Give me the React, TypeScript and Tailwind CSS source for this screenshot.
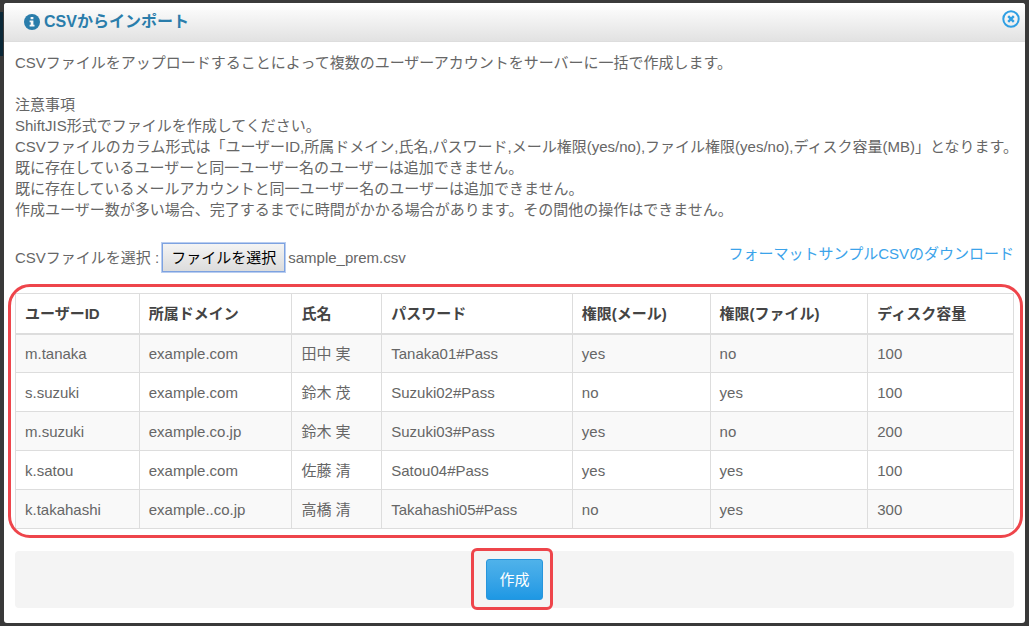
import { useRef, useState } from "react";

interface IUserRow {
    id: string;
    domain: string;
    name: string;
    password: string;
    mail: string;
    file: string;
    disk: number;
}

const columns = [
    { label: "ユーザーID", width: "w-[12.4%]" },
    { label: "所属ドメイン", width: "w-[15.3%]" },
    { label: "氏名", width: "w-[9%]" },
    { label: "パスワード", width: "w-[19.1%]" },
    { label: "権限(メール)", width: "w-[13.8%]" },
    { label: "権限(ファイル)", width: "w-[15.8%]" },
    { label: "ディスク容量", width: "w-[14.6%]" },
];

const users: IUserRow[] = [
    { id: "m.tanaka", domain: "example.com", name: "田中 実", password: "Tanaka01#Pass", mail: "yes", file: "no", disk: 100 },
    { id: "s.suzuki", domain: "example.com", name: "鈴木 茂", password: "Suzuki02#Pass", mail: "no", file: "yes", disk: 100 },
    { id: "m.suzuki", domain: "example.co.jp", name: "鈴木 実", password: "Suzuki03#Pass", mail: "yes", file: "no", disk: 200 },
    { id: "k.satou", domain: "example.com", name: "佐藤 清", password: "Satou04#Pass", mail: "yes", file: "yes", disk: 100 },
    { id: "k.takahashi", domain: "example..co.jp", name: "高橋 清", password: "Takahashi05#Pass", mail: "no", file: "yes", disk: 300 },
];

const notes = [
    "ShiftJIS形式でファイルを作成してください。",
    "CSVファイルのカラム形式は「ユーザーID,所属ドメイン,氏名,パスワード,メール権限(yes/no),ファイル権限(yes/no),ディスク容量(MB)」となります。",
    "既に存在しているユーザーと同一ユーザー名のユーザーは追加できません。",
    "既に存在しているメールアカウントと同一ユーザー名のユーザーは追加できません。",
    "作成ユーザー数が多い場合、完了するまでに時間がかかる場合があります。その間他の操作はできません。",
];

function InfoIcon() {
    return (
        <svg className="size-4" viewBox="0 0 16 16" aria-hidden="true">
            <circle cx="8" cy="8" r="8" fill="#2a7dab" />
            <path d="M6.6 3h2.8v2.2H6.6zM5.6 6.4h3.8v4.4h1.1v1.8H5.6v-1.8h1.1V8.2H5.6z" fill="#f8f8f8" />
        </svg>
    )
}

function CloseIcon() {
    return (
        <svg className="size-[18px]" viewBox="0 0 18 18" fill="none" stroke="#2f9fe3" aria-hidden="true">
            <circle cx="9" cy="9" r="7.7" strokeWidth="2" />
            <path d="M6.2 6.2l5.6 5.6M11.8 6.2l-5.6 5.6" strokeWidth="2.4" />
        </svg>
    )
}

function FilePicker() {
    const input = useRef<HTMLInputElement>(null);
    const [fileName, setFileName] = useState("sample_prem.csv");

    return (
        <div className="flex items-center gap-[3px]">
            <label htmlFor="csv-file">CSVファイルを選択 :</label>
            <button
                type="button"
                className="h-[29px] border border-[#7da2e0] bg-linear-to-b from-[#f4f4f4] to-[#dcdcdc] px-2 text-black outline-1 outline-[#b9cdf0]"
                onClick={() => input.current?.click()}>
                ファイルを選択
            </button>
            <input
                ref={input}
                id="csv-file"
                type="file"
                accept=".csv"
                className="hidden"
                onChange={(source) => setFileName(source.target.files?.[0]?.name ?? "")} />
            <span>{fileName}</span>
        </div>
    )
}

function UserTable() {
    return (
        <div className="relative mt-[21px]">
            <table className="w-full table-fixed border-collapse border border-[#dddddd] text-left">
                <thead>
                    <tr className="h-10 border-b-2 border-[#dddddd] text-[#444444]">
                        {columns.map((column) => (
                            <th key={column.label} className={`${column.width} border-x border-[#dddddd] px-[9px] font-bold`}>{column.label}</th>
                        ))}
                    </tr>
                </thead>
                <tbody>
                    {users.map((user) => (
                        <tr key={user.id} className="h-[39px] odd:bg-[#f9f9f9]">
                            {Object.values(user).map((value, index) => (
                                <td key={index} className="border border-[#dddddd] px-[9px]">{value}</td>
                            ))}
                        </tr>
                    ))}
                </tbody>
            </table>
            <div className="pointer-events-none absolute -top-[9px] -right-[9px] -bottom-[9px] -left-[7px] rounded-[22px] border-3 border-[#ee454b]" />
        </div>
    )
}

export default function App() {
    return (
        <div className="relative min-h-screen bg-[#393939] px-1 pt-[3px] pb-1 font-['Liberation_Sans','Noto_Sans_CJK_JP',sans-serif] text-[15px] leading-[21px] text-[#666666]">
            {/* dimmed page bar behind the dialog */}
            <div className="absolute top-3 left-0 h-11 w-[3px] bg-[#0b2838]" />
            <div role="dialog" aria-labelledby="import-title" className="overflow-hidden rounded-[3px] bg-white">
                <header className="flex h-[39px] items-center justify-between border-b border-[#dddddd] bg-linear-to-b from-white to-[#e2e2e2] pr-[5px] pl-5">
                    <h1 id="import-title" className="flex items-center gap-1 text-base font-bold text-[#2a7dab]">
                        <InfoIcon />
                        CSVからインポート
                    </h1>
                    <button type="button" aria-label="閉じる" className="pb-1.5">
                        <CloseIcon />
                    </button>
                </header>

                <main className="px-[11px] pt-[10px] pb-[15px]">
                    <p>CSVファイルをアップロードすることによって複数のユーザーアカウントをサーバーに一括で作成します。</p>
                    <div className="mt-[21px] lg:whitespace-nowrap">
                        <h2>注意事項</h2>
                        {notes.map((note) => <p key={note}>{note}</p>)}
                    </div>

                    <div className="mt-[23px] flex items-start justify-between">
                        <FilePicker />
                        <a href="#sample" className="text-[#3ba3ea]">フォーマットサンプルCSVのダウンロード</a>
                    </div>

                    <UserTable />

                    <div className="mt-[22px] flex justify-center rounded bg-[#f4f4f4] py-2">
                        <div className="relative">
                            <button type="button" className="h-[41px] rounded-[3px] border border-[#2795dc] bg-linear-to-b from-[#4fb2ea] to-[#1d98e4] px-3 text-white">
                                作成
                            </button>
                            <div className="pointer-events-none absolute -top-[11px] -right-[10px] -bottom-[10px] -left-[15px] rounded-md border-3 border-[#ee454b]" />
                        </div>
                    </div>
                </main>
            </div>
        </div>
    )
}
